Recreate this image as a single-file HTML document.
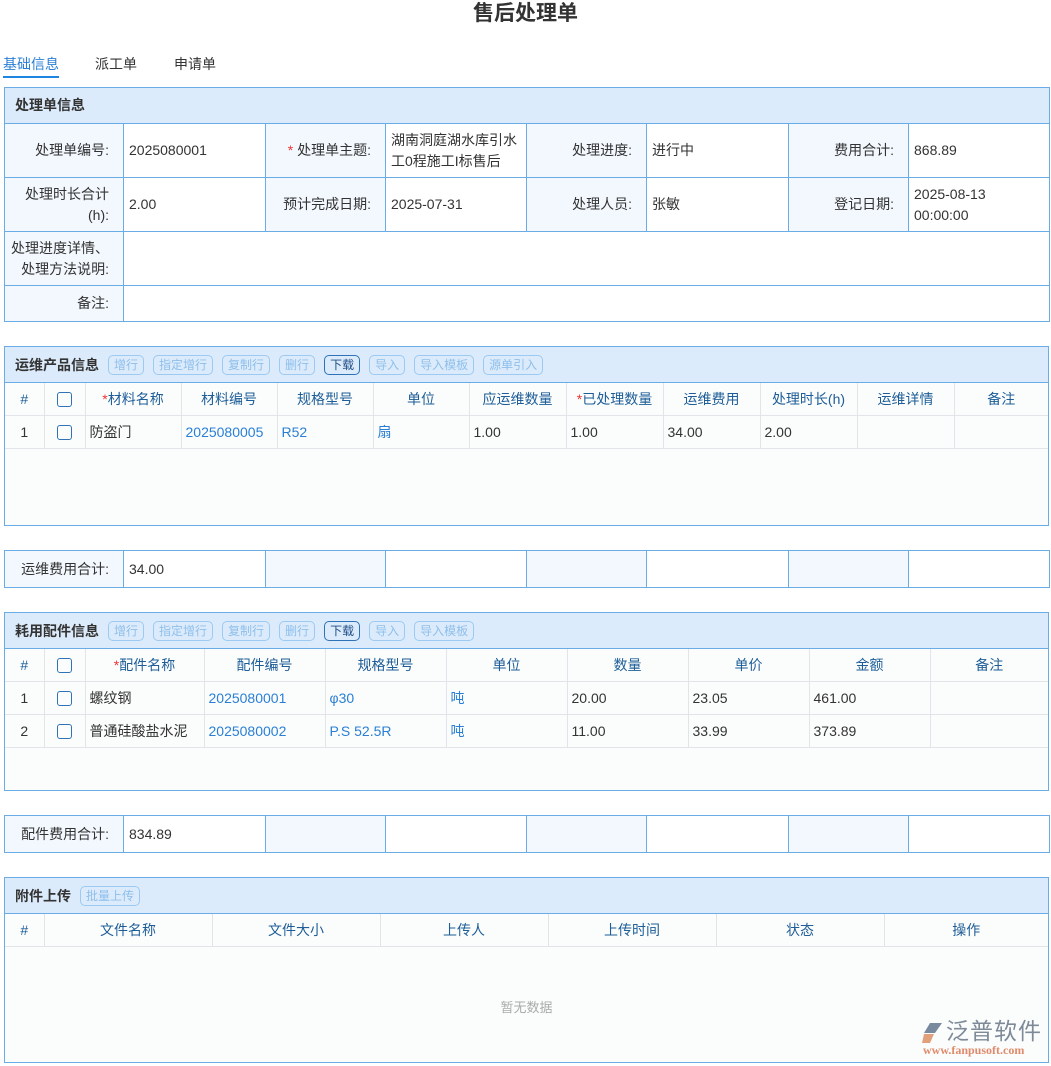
<!DOCTYPE html>
<html><head><meta charset="utf-8">
<style>
*{box-sizing:border-box;margin:0;padding:0}
body{width:1051px;height:1066px;background:#fff;font-family:"Liberation Sans","Noto Sans CJK SC",sans-serif;font-size:14px;color:#333;position:relative;overflow:hidden}
.abs{position:absolute}
.title{left:0;width:1051px;top:1px;text-align:center;font-size:21px;font-weight:bold;line-height:26px;color:#333}
.tab{top:55px;font-size:14px;line-height:18px}
table{border-collapse:collapse;table-layout:fixed;position:absolute;left:4px;width:1045px}
td,th{border:1px solid #6aace6;font-weight:normal;overflow:hidden}
.f td{padding:0 5px;line-height:21px}
.f td.lb{padding-right:14px}
.lb{background:#f3f8fe;text-align:right}
.sec{position:absolute;left:4px;width:1045px;border:1px solid #6aace6;background:#fbfdfd}
.hd{height:36px;background:#dcebfb;border-bottom:1px solid #6aace6;padding-left:10px;display:flex;align-items:center;font-weight:bold;font-size:14px;color:#333}
.btn{display:inline-block;height:20px;line-height:18px;border:1px solid #9ccaf2;border-radius:5px;color:#8ebfeb;font-weight:normal;font-size:12px;padding:0 5px;margin-left:9px}
.btn.on{border-color:#2f73b6;color:#1f4f86}
.sec table{position:static;width:100%}
.sec td{border:1px solid #e1e5ea;padding:0 4px;height:33px}
.sec tr td:first-child{border-left:none}
.sec tr td:last-child{border-right:none}
.th td{text-align:center;color:#1e5d97;height:32px}
.sec tr:first-child td{border-top:none}
.cb{display:inline-block;width:15px;height:15px;border:1px solid #2f73b6;border-radius:3px;vertical-align:middle}
.bl{color:#2a7fd4}
.r{color:#e33}
</style></head><body>
<div class="abs title">售后处理单</div>
<div class="abs tab" style="left:3px;color:#2a7fd4">基础信息</div>
<div class="abs" style="left:3px;top:76px;width:56px;height:2px;background:#1e86e0"></div>
<div class="abs tab" style="left:95px">派工单</div>
<div class="abs tab" style="left:174px">申请单</div>

<table class="f" style="top:87px">
<colgroup><col style="width:119px"><col style="width:142px"><col style="width:120px"><col style="width:141px"><col style="width:120px"><col style="width:142px"><col style="width:120px"><col style="width:141px"></colgroup>
<tr style="height:36px"><td colspan="8" style="background:#dcebfb;font-weight:bold;font-size:14px;padding-left:10px">处理单信息</td></tr>
<tr style="height:54px"><td class="lb">处理单编号:</td><td>2025080001</td><td class="lb"><span class="r">*</span> 处理单主题:</td><td>湖南洞庭湖水库引水<br>工0程施工I标售后</td><td class="lb">处理进度:</td><td>进行中</td><td class="lb">费用合计:</td><td>868.89</td></tr>
<tr style="height:54px"><td class="lb">处理时长合计<br>(h):</td><td>2.00</td><td class="lb">预计完成日期:</td><td>2025-07-31</td><td class="lb">处理人员:</td><td>张敏</td><td class="lb">登记日期:</td><td>2025-08-13<br>00:00:00</td></tr>
<tr style="height:54px"><td class="lb">处理进度详情、<br>处理方法说明:</td><td colspan="7"></td></tr>
<tr style="height:36px"><td class="lb">备注:</td><td colspan="7"></td></tr>
</table>

<div class="sec" style="top:346px;height:180px">
<div class="hd">运维产品信息<span class="btn">增行</span><span class="btn">指定增行</span><span class="btn">复制行</span><span class="btn">删行</span><span class="btn on">下载</span><span class="btn">导入</span><span class="btn">导入模板</span><span class="btn">源单引入</span></div>
<table>
<colgroup><col style="width:39px"><col style="width:41px"><col style="width:96px"><col style="width:96px"><col style="width:96px"><col style="width:96px"><col style="width:97px"><col style="width:97px"><col style="width:97px"><col style="width:97px"><col style="width:97px"><col></colgroup>
<tr class="th"><td>#</td><td><span class="cb"></span></td><td><span class="r">*</span>材料名称</td><td>材料编号</td><td>规格型号</td><td>单位</td><td>应运维数量</td><td><span class="r">*</span>已处理数量</td><td>运维费用</td><td>处理时长(h)</td><td>运维详情</td><td>备注</td></tr>
<tr><td style="text-align:center">1</td><td style="text-align:center"><span class="cb"></span></td><td>防盗门</td><td class="bl">2025080005</td><td class="bl">R52</td><td class="bl">扇</td><td>1.00</td><td>1.00</td><td>34.00</td><td>2.00</td><td></td><td></td></tr>
</table></div>

<table class="f" style="top:550px">
<colgroup><col style="width:119px"><col style="width:142px"><col style="width:120px"><col style="width:141px"><col style="width:120px"><col style="width:142px"><col style="width:120px"><col style="width:141px"></colgroup>
<tr style="height:37px"><td class="lb">运维费用合计:</td><td>34.00</td><td class="lb"></td><td></td><td class="lb"></td><td></td><td class="lb"></td><td></td></tr>
</table>

<div class="sec" style="top:612px;height:179px">
<div class="hd">耗用配件信息<span class="btn">增行</span><span class="btn">指定增行</span><span class="btn">复制行</span><span class="btn">删行</span><span class="btn on">下载</span><span class="btn">导入</span><span class="btn">导入模板</span></div>
<table>
<colgroup><col style="width:39px"><col style="width:41px"><col style="width:119px"><col style="width:121px"><col style="width:121px"><col style="width:121px"><col style="width:121px"><col style="width:121px"><col style="width:121px"><col></colgroup>
<tr class="th"><td>#</td><td><span class="cb"></span></td><td><span class="r">*</span>配件名称</td><td>配件编号</td><td>规格型号</td><td>单位</td><td>数量</td><td>单价</td><td>金额</td><td>备注</td></tr>
<tr><td style="text-align:center">1</td><td style="text-align:center"><span class="cb"></span></td><td>螺纹钢</td><td class="bl">2025080001</td><td class="bl">φ30</td><td class="bl">吨</td><td>20.00</td><td>23.05</td><td>461.00</td><td></td></tr>
<tr><td style="text-align:center">2</td><td style="text-align:center"><span class="cb"></span></td><td>普通硅酸盐水泥</td><td class="bl">2025080002</td><td class="bl">P.S 52.5R</td><td class="bl">吨</td><td>11.00</td><td>33.99</td><td>373.89</td><td></td></tr>
</table></div>

<table class="f" style="top:815px">
<colgroup><col style="width:119px"><col style="width:142px"><col style="width:120px"><col style="width:141px"><col style="width:120px"><col style="width:142px"><col style="width:120px"><col style="width:141px"></colgroup>
<tr style="height:37px"><td class="lb">配件费用合计:</td><td>834.89</td><td class="lb"></td><td></td><td class="lb"></td><td></td><td class="lb"></td><td></td></tr>
</table>

<div class="sec" style="top:877px;height:186px">
<div class="hd">附件上传<span class="btn">批量上传</span></div>
<table>
<colgroup><col style="width:39px"><col style="width:168px"><col style="width:168px"><col style="width:168px"><col style="width:168px"><col style="width:168px"><col></colgroup>
<tr class="th"><td>#</td><td>文件名称</td><td>文件大小</td><td>上传人</td><td>上传时间</td><td>状态</td><td>操作</td></tr>
</table>
<div style="text-align:center;color:#aaa;font-size:13px;margin-top:50px">暂无数据</div>
</div>

<div class="abs" style="left:920px;top:1018px;width:125px;height:40px">
<svg class="abs" style="left:0;top:3px" width="24" height="24" viewBox="0 0 24 24"><path d="M10 2 L22 2 L15 12 L4 12 Z" fill="#7a8a9e"/><path d="M4 13 L14 13 L10 22 L2 22 Z" fill="#e0a07a"/></svg>
<div class="abs" style="left:26px;top:0;font-size:23px;line-height:26px;color:#7f8a98;letter-spacing:1px">泛普软件</div>
<div class="abs" style="left:3px;top:25px;font-family:'Liberation Serif',serif;font-size:12px;font-weight:bold;color:#e08a6a">www.fanpusoft.com</div>
</div>
</body></html>
